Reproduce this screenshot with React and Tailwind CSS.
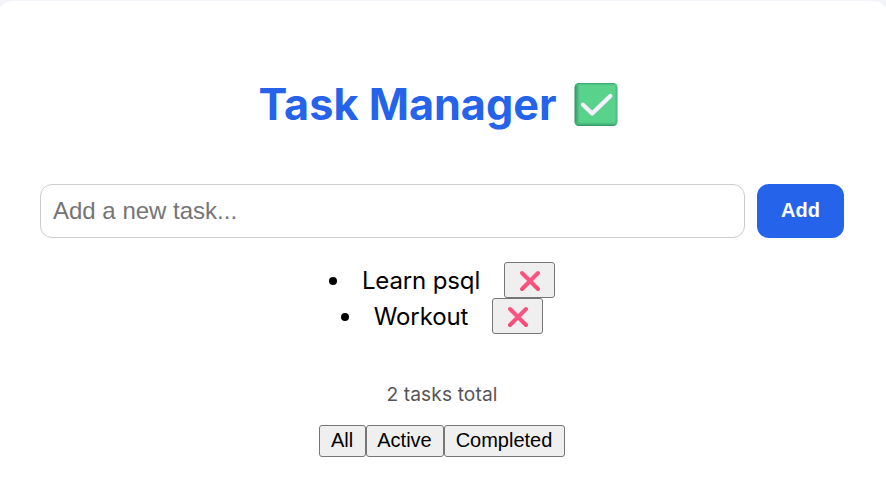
const tasks = ["Learn psql", "Workout"];

function CheckEmoji() {
  return (
    <svg className="ml-[17px] h-[44px] w-[44px] shrink-0" viewBox="0 0 44 44" fill="none" aria-hidden="true">
      <defs>
        <linearGradient id="side" x1="0" y1="0" x2="1" y2="0">
          <stop offset="0" stopColor="#2f9466" />
          <stop offset="0.12" stopColor="#59d28c" />
          <stop offset="0.93" stopColor="#59d28c" />
          <stop offset="1" stopColor="#43b57b" />
        </linearGradient>
        <linearGradient id="edge" x1="0" y1="0" x2="0" y2="1">
          <stop offset="0" stopColor="#349a69" />
          <stop offset="0.07" stopColor="#59d28c" stopOpacity="0" />
          <stop offset="0.88" stopColor="#59d28c" stopOpacity="0" />
          <stop offset="1" stopColor="#2f9063" />
        </linearGradient>
      </defs>
      <rect x="0.5" y="1" width="43" height="43" rx="4.5" fill="url(#side)" />
      <rect x="0.5" y="1" width="43" height="43" rx="4.5" fill="url(#edge)" />
      <path d="M9 22.7 18.2 31.5 36.3 14" stroke="#f7effb" strokeWidth="4.3" strokeLinecap="round" strokeLinejoin="round" />
    </svg>
  );
}

function CrossEmoji() {
  return (
    <svg className="mt-px h-[22px] w-[22px]" viewBox="0 0 22 22" fill="none" aria-hidden="true">
      <defs>
        <linearGradient id="cross" x1="0" y1="0" x2="0" y2="22" gradientUnits="userSpaceOnUse">
          <stop offset="0" stopColor="#f7527c" />
          <stop offset="0.5" stopColor="#ff5584" />
          <stop offset="1" stopColor="#f34770" />
        </linearGradient>
      </defs>
      <path d="M3 3 19 19M19 3 3 19" stroke="url(#cross)" strokeWidth="4" strokeLinecap="round" />
    </svg>
  );
}

function TaskRow({ label }) {
  return (
    <li className="flex h-9 items-center justify-center">
      <span className="mt-0.5 mr-[25px] h-2 w-2 rounded-full bg-black" />
      <span className="mr-6 pt-0.5 text-2xl leading-9 tracking-[-0.13px]">{label}</span>
      <button aria-label="Delete" className="flex h-9 w-[51px] items-center justify-center rounded-[3px] border border-[#767676] bg-[#efefef]">
        <CrossEmoji />
      </button>
    </li>
  );
}

function FilterButton({ children, className }) {
  return (
    <button className={`flex h-8 items-center justify-center rounded-[3px] border border-[#767676] bg-[#efefef] pr-px pb-0.5 font-['Liberation_Sans',Arial,sans-serif] text-[20px] leading-none text-black ${className}`}>
      {children}
    </button>
  );
}

export default function App() {
  return (
    <div className="h-[499px] overflow-hidden bg-[#f3f4f9] pt-px font-['Inter',sans-serif] text-black">
      <main className="-mx-1 flex h-[520px] flex-col rounded-[18px] bg-white pt-[77px] pr-[46px] pl-11">
        <h1 className="flex h-[52px] items-center justify-center pr-[8px] text-[43.2px] leading-[52px] font-bold whitespace-nowrap text-[#2563eb]">
          Task Manager
          <CheckEmoji />
        </h1>
        <form className="mt-[54px] flex h-[54px] gap-3" onSubmit={(e) => e.preventDefault()}>
          <input
            placeholder="Add a new task..."
            className="min-w-0 flex-1 rounded-xl border border-[#cccccc] px-3 font-['Liberation_Sans',Arial,sans-serif] text-2xl text-black placeholder:text-[#757575]"
          />
          <button className="w-[87px] rounded-xl bg-[#2563eb] pb-0.5 font-['Liberation_Sans',Arial,sans-serif] text-[20px] font-bold text-white">
            Add
          </button>
        </form>
        <ul className="mt-6">
          {tasks.map((task) => (
            <TaskRow key={task} label={task} />
          ))}
        </ul>
        <p className="mt-[46px] text-center text-[19.2px] leading-[29px] tracking-[0.1px] text-[#555555]">2 tasks total</p>
        <div className="mt-4 flex justify-center">
          <FilterButton className="w-[47px]">All</FilterButton>
          <FilterButton className="w-[78px]">Active</FilterButton>
          <FilterButton className="w-[121px]">Completed</FilterButton>
        </div>
      </main>
    </div>
  );
}
